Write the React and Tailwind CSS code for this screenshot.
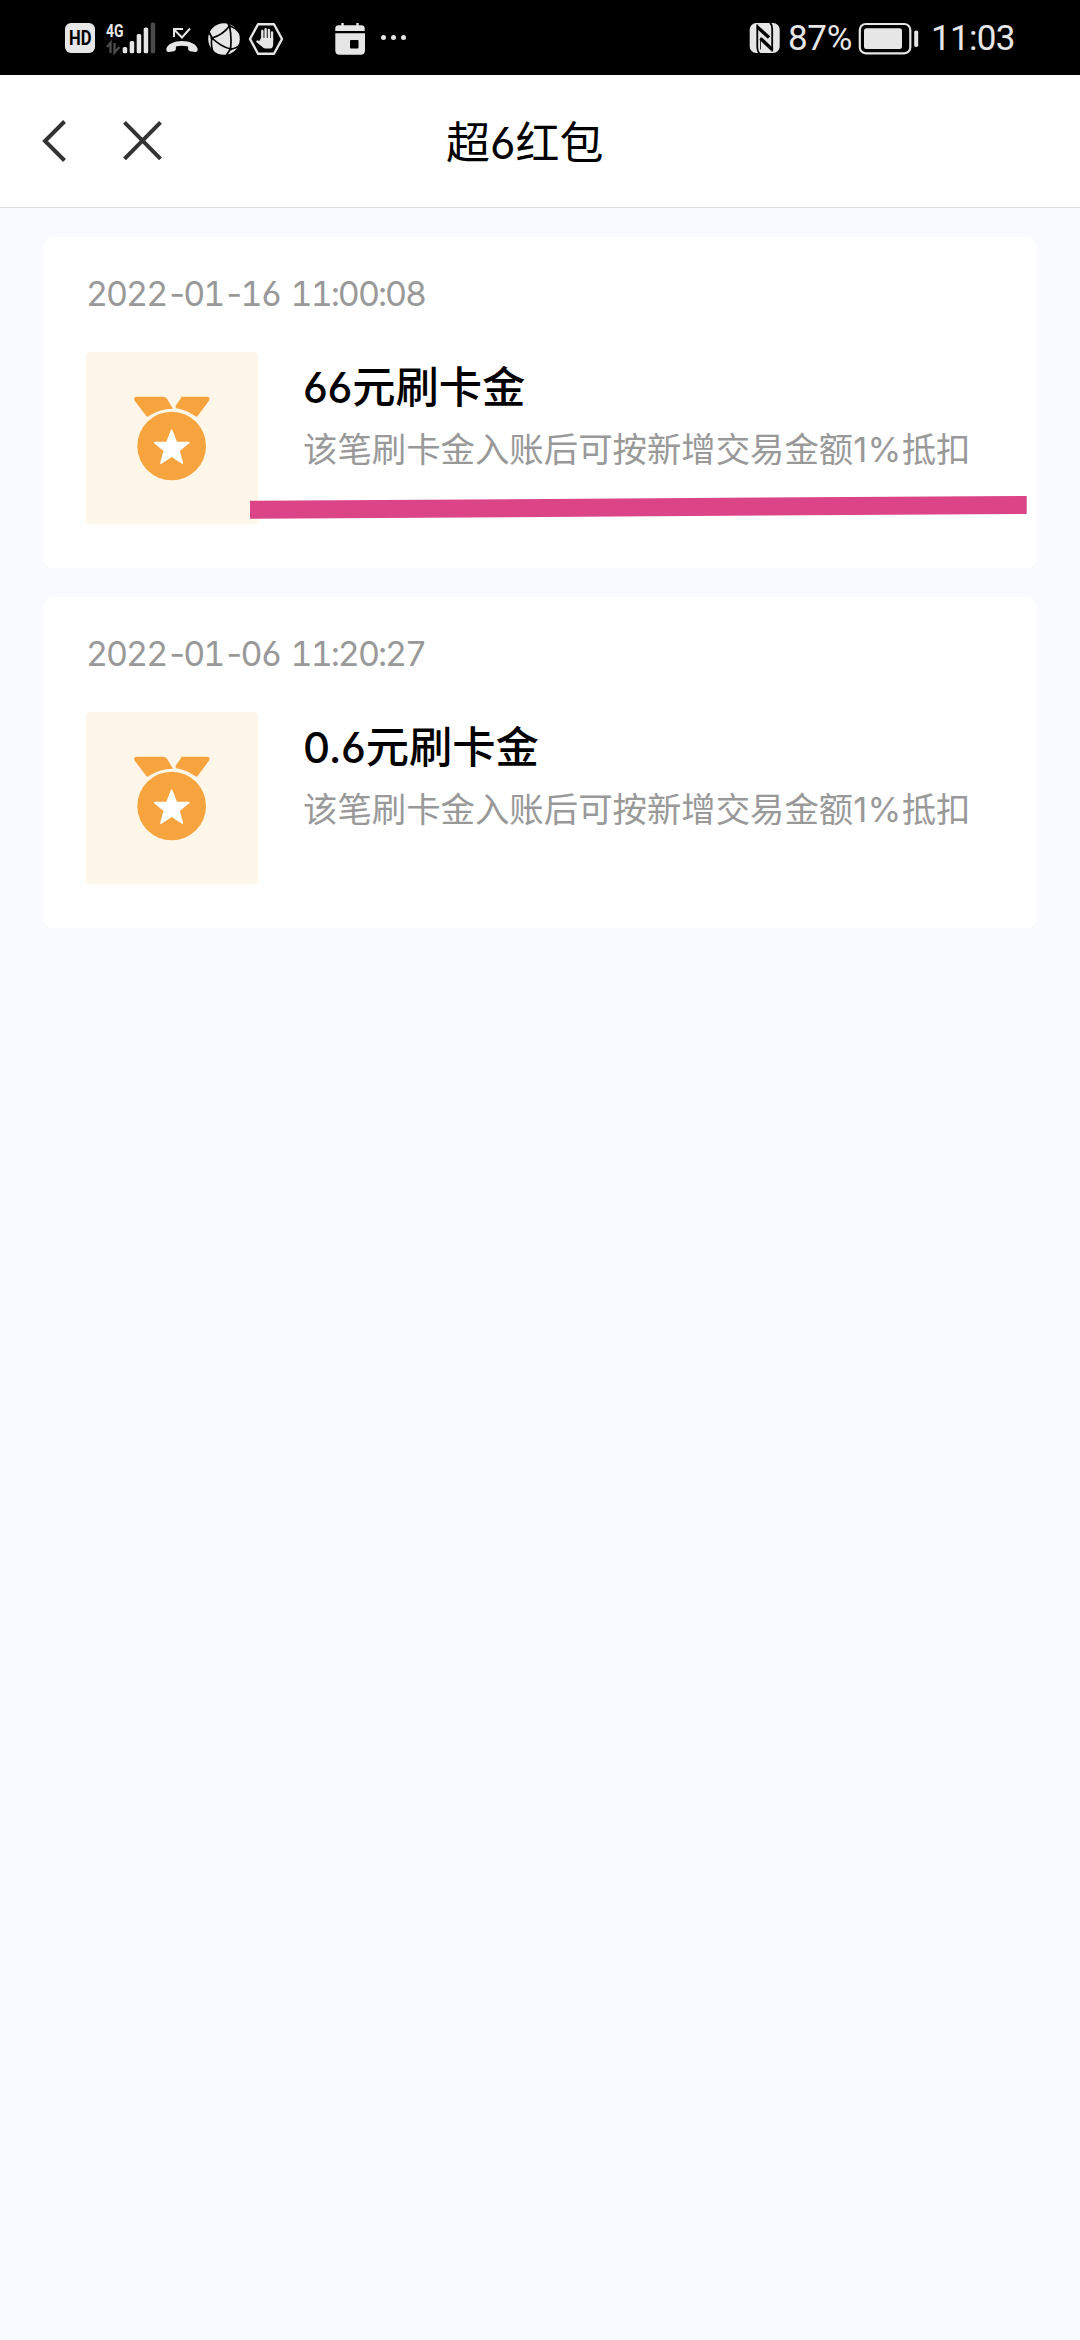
import React from 'react';

const records = [
  { id: 1, date: ['2022', '01', '16'], clock: '11:00:08', amount: '66', marked: true },
  { id: 2, date: ['2022', '01', '06'], clock: '11:20:27', amount: '0.6', marked: false },
];

const StatusBar = () => (
  <div className="flex h-[75px] items-center bg-black pl-[65px] pr-[66px] text-[#e6e6e6]">
    {/* HD badge */}
    <svg className="h-[30px] w-[30px]" viewBox="0 0 30 30">
      <rect width="30" height="30" rx="6" fill="#e6e6e6" />
      <text x="4" y="22" fontFamily="Roboto" fontWeight="700" fontSize="19.500" textLength="22.500" lengthAdjust="spacingAndGlyphs">HD</text>
    </svg>

    {/* Signal */}
    <svg className="ml-[10px] h-[50px] w-[52px]" viewBox="105 12 52 50" fill="#e6e6e6">
      <text x="106" y="35.5" fontFamily="Roboto" fontWeight="700" fontSize="19" textLength="17.5" lengthAdjust="spacingAndGlyphs">4G</text>
      <path d="M107 46l3.5-4v10M114.500 42v9.500l5-5.500" fill="none" stroke="#4a4a4a" strokeWidth="2.400" />
      <rect x="122.700" y="46" width="4.500" height="6.300" rx="1.600" />
      <rect x="129.700" y="40" width="4.500" height="12.300" rx="1.600" />
      <rect x="136.700" y="33" width="4.500" height="19.300" rx="1.600" />
      <rect x="143.700" y="26.500" width="4.500" height="25.800" rx="1.600" />
      <rect x="150.700" y="21.500" width="4.500" height="30.800" rx="1.600" fill="#4a4a4a" />
    </svg>

    {/* Missed call */}
    <svg className="ml-[8px] h-[34px] w-[34px]" viewBox="165 20 34 34" fill="#e6e6e6">
      <path d="M174 36v-8M173 28h10M174.500 29l7.500 7.500 8-9" fill="none" stroke="#e6e6e6" strokeWidth="2" />
      <path d="M166.300 48c1-5 8-8 15.700-8s14.700 3 15.700 8c.2 2-1 3.200-2.600 3l-5-.8c-1.400-.3-2-1.200-2-2.600v-2c-3.600-1.300-8.600-1.300-12.200 0v2c0 1.400-.6 2.300-2 2.600l-5 .8c-1.600.2-2.800-1-2.600-3z" />
    </svg>

    {/* Browser */}
    <svg className="ml-[8px] h-[34px] w-[34px]" viewBox="207 20 34 34">
      <circle cx="224" cy="38" r="15.800" fill="#e6e6e6" />
      <path
        d="M212 37c7-2 13-6 17.500-12M212 37c5 5 11 9 18.500 11M229.500 25c1.500 7 1.800 16 1 23M229.500 25l-3-5M229.500 25c4 1 7 3 10 7M230.500 48c3 0 6-1 9-4M230.500 48l-4 6M212 37l-3-6M212 37c-1 4-1 8 1 14"
        fill="none"
        stroke="#000"
        strokeWidth="1.700"
      />
      <g fill="#000">
        <circle cx="212" cy="37" r="1.600" />
        <circle cx="229.500" cy="25" r="1.600" />
        <circle cx="230.500" cy="48" r="1.600" />
      </g>
    </svg>

    {/* Blocked hand */}
    <svg className="ml-[7px] h-[34px] w-[36px]" viewBox="248 20 36 34">
      <path d="M258 23.300h16L282 38l-8 14.700h-16L250 38z" fill="none" stroke="#e6e6e6" strokeWidth="2.400" strokeLinejoin="round" />
      <g fill="none" stroke="#e6e6e6" strokeLinecap="round" strokeWidth="2.400">
        <path d="M262.300 38v-8M265.600 38V28.300M268.900 38v-9M272 39v-7.500M257.500 40.500l4.500 3.500" />
      </g>
      <path d="M261 37h12.200v6c0 2.500-1 4.500-3 4.500h-5c-1.500 0-2.500-1-3.500-2.500l-3-4z" fill="#e6e6e6" />
    </svg>

    {/* Calendar */}
    <svg className="ml-[50px] h-[34px] w-[32px]" viewBox="334 20 32 34" fill="#e6e6e6">
      <path d="M335.300 30v-2.500c0-2 1.200-3.200 3.200-3.200h2.800V22h2.400v2.300h12.600V22h2.400v2.300h2.800c2 0 3.200 1.200 3.200 3.200V30z" />
      <path fillRule="evenodd" d="M335.300 32.300h29.700v17.200c0 2.800-1.500 4.200-4.200 4.200h-21.300c-2.700 0-4.200-1.400-4.200-4.200zM351 39a1 1 0 0 0-1 1v6.500a1 1 0 0 0 1 1h6.500a1 1 0 0 0 1-1V40a1 1 0 0 0-1-1z" />
    </svg>
    <div className="ml-[15px] flex gap-[5px]">
      <span className="h-[5px] w-[5px] rounded-full bg-[#e6e6e6]" />
      <span className="h-[5px] w-[5px] rounded-full bg-[#e6e6e6]" />
      <span className="h-[5px] w-[5px] rounded-full bg-[#e6e6e6]" />
    </div>

    {/* NFC */}
    <svg className="ml-auto h-[32px] w-[32px]" viewBox="749 21 32 32">
      <rect x="749.700" y="22" width="30" height="30" rx="6.500" fill="#e6e6e6" />
      <g fill="none" stroke="#000">
        <path d="M757.300 23.500v23c0 2.500.7 4.500 2.200 6M772.200 50.500V28c0-3-.7-5-2.200-6.500" strokeWidth="1.800" />
        <path d="M757.300 26l11.700 10.500M760.500 37.500l11.700 11" strokeWidth="3.400" />
        <path d="M760.500 36.500v12" strokeWidth="0.800" />
      </g>
    </svg>
    <span className="ml-[7px] w-[66px] whitespace-nowrap pt-[2px] font-['Roboto'] text-[35px] leading-none tracking-[-0.3px]">87%</span>

    {/* Battery */}
    <svg className="ml-[4px] h-[34px] w-[62px]" viewBox="858 20 62 34">
      <rect x="859.800" y="23" width="50.500" height="29.300" rx="6" fill="none" stroke="#e6e6e6" strokeWidth="2.200" />
      <rect x="864" y="27.300" width="38" height="20.700" rx="2.500" fill="#e6e6e6" />
      <rect x="914.200" y="29.500" width="4" height="16.500" rx="1.800" fill="#e6e6e6" />
    </svg>
    <span className="ml-[11px] w-[83px] whitespace-nowrap pt-[2px] font-['Roboto'] text-[35px] leading-none tracking-[-0.7px]">11:03</span>
  </div>
);

const NavBar = () => (
  <header className="flex h-[133px] items-center border-b border-[#dcdcdf] bg-white pl-[42px]">
    <button aria-label="返回">
      <svg className="h-[42px] w-[24px]" viewBox="42 120 24 42" fill="none" stroke="#333" strokeWidth="4">
        <path d="M64.500 121.500L45 141l19.500 19.500" />
      </svg>
    </button>
    <button className="ml-[56px]" aria-label="关闭">
      <svg className="h-[42px] w-[42px]" viewBox="122 120 42 42" fill="none" stroke="#333" strokeWidth="4">
        <path d="M124.500 122.300l36 36.500M160.500 122.300l-36 36.500" />
      </svg>
    </button>
    <h1 className="ml-[282px] whitespace-nowrap pt-[4px] font-['Inter','Noto_Sans_CJK_SC',sans-serif] text-[44px] leading-none text-black [font-feature-settings:'cv03']">
      超6红包
    </h1>
  </header>
);

const Medal = () => (
  <svg className="h-full w-full" viewBox="0 0 516 516" fill="#f7a43f">
    <path d="M153 134h78c6 0 9 2 12 6l18 30c-28 0-52 8-76 24-4-1-5-3-7-6l-32-42c-4-7-1-12 7-12z" />
    <path d="M286 134h76c8 0 11 5 7 12l-34 46c-2 2-4 3-6 1-16-11-36-20-58-24-3-3-3-6-1-9l15-22c1-2 1-4 1-4z" />
    <circle cx="257" cy="282" r="103" />
    <path
      d="M257 235l14 36 37 1-29 24 10 37-32-21-32 21 10-37-29-24 37-1z"
      fill="#fff"
      stroke="#fff"
      strokeWidth="5"
      strokeLinejoin="round"
    />
  </svg>
);

const Dash = () => <span className="tracking-[-5px]">-</span>;

const RecordCard = ({ date, clock, amount, marked }) => (
  <section className="relative h-[331px] rounded-[10px] bg-white px-[43px] pt-[36px]">
    <p className="h-[79px] whitespace-nowrap font-['Inter',sans-serif] text-[34px] leading-[42px] tracking-[-2px] text-[#999] [font-feature-settings:'cv03','tnum'] [word-spacing:3px]">
      {date[0]}<Dash />{date[1]}<Dash />{date[2]} {clock}
    </p>
    <div className="flex">
      <div className="h-[172px] w-[172px] shrink-0 rounded-[4px] bg-[#fff6ea]">
        <Medal />
      </div>
      <div className="ml-[45px] whitespace-nowrap font-['Inter','Noto_Sans_CJK_SC',sans-serif] [font-feature-settings:'cv03']">
        <h2 className="mt-[5px] text-[43.3px] font-medium leading-[60px] text-black">
          <span className="text-[42px] tracking-[-0.300px]">{amount}</span>元刷卡金
        </h2>
        <p className="mt-[7px] text-[34.4px] leading-[50px] text-[#999]">
          该笔刷卡金入账后可按新增交易金额<span className="tracking-[0.300px]">1%</span>抵扣
        </p>
      </div>
    </div>
    {/* Highlighter stroke */}
    {marked && (
      <svg className="absolute left-[206px] top-[258px] h-[25px] w-[780px]" viewBox="0 0 780 25">
        <path d="M1 5.700L777.700 1v18L1 23.700z" fill="#db4486" />
      </svg>
    )}
  </section>
);

const App = () => (
  <div className="min-h-[2340px] w-[1080px] overflow-hidden bg-[#f8faff]">
    <StatusBar />
    <NavBar />
    <main className="flex flex-col gap-[29px] px-[43px] pt-[29px]">
      {records.map((record) => (
        <RecordCard key={record.id} {...record} />
      ))}
    </main>
  </div>
);

export default App;
